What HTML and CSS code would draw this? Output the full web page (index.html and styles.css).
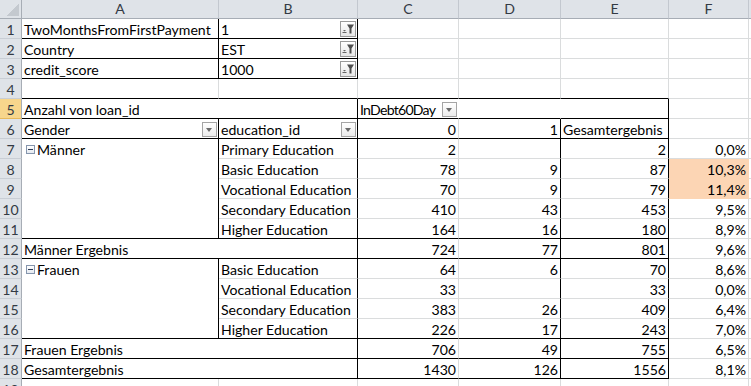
FILE: index.html
```html
<!DOCTYPE html>
<html>
<head>
<meta charset="utf-8">
<link rel="stylesheet" href="styles.css">
</head>
<body>
<div class="sheet">
  <!-- column headers -->
  <div class="ch corner"></div>
  <div class="ch">A</div><div class="ch">B</div><div class="ch">C</div><div class="ch">D</div><div class="ch">E</div><div class="ch">F</div><div class="ch last"></div>

  <!-- row 1 -->
  <div class="rh">1</div>
  <div class="c br bb">TwoMonthsFromFirstPayment</div>
  <div class="c br bb">1<span class="fbtn"><svg width="14" height="14" viewBox="0 0 14 14"><polygon points="6,2.5 13,2.5 10.5,6.5 10.5,11.5 8.5,11.5 8.5,6.5" fill="#4d4d4d"/><rect x="1.5" y="10" width="4" height="1" fill="#666"/><polygon points="2,8 5,8 3.5,9.5" fill="#666"/></svg></span></div>
  <div class="c"></div><div class="c"></div><div class="c"></div><div class="c"></div><div class="c"></div>

  <!-- row 2 -->
  <div class="rh">2</div>
  <div class="c br bb">Country</div>
  <div class="c br bb">EST<span class="fbtn"><svg width="14" height="14" viewBox="0 0 14 14"><polygon points="6,2.5 13,2.5 10.5,6.5 10.5,11.5 8.5,11.5 8.5,6.5" fill="#4d4d4d"/><rect x="1.5" y="10" width="4" height="1" fill="#666"/><polygon points="2,8 5,8 3.5,9.5" fill="#666"/></svg></span></div>
  <div class="c"></div><div class="c"></div><div class="c"></div><div class="c"></div><div class="c"></div>

  <!-- row 3 -->
  <div class="rh">3</div>
  <div class="c br bb">credit_score</div>
  <div class="c br bb">1000<span class="fbtn"><svg width="14" height="14" viewBox="0 0 14 14"><polygon points="6,2.5 13,2.5 10.5,6.5 10.5,11.5 8.5,11.5 8.5,6.5" fill="#4d4d4d"/><rect x="1.5" y="10" width="4" height="1" fill="#666"/><polygon points="2,8 5,8 3.5,9.5" fill="#666"/></svg></span></div>
  <div class="c"></div><div class="c"></div><div class="c"></div><div class="c"></div><div class="c"></div>

  <!-- row 4 -->
  <div class="rh">4</div>
  <div class="c bb"></div><div class="c bb"></div><div class="c bb"></div><div class="c bb"></div><div class="c bb"></div><div class="c"></div><div class="c"></div>

  <!-- row 5 -->
  <div class="rh sel">5</div>
  <div class="c span2 br bb">Anzahl von loan_id</div>
  <div class="c bb nr"><span class="tight">InDebt60Day</span><span class="dbtn"></span></div>
  <div class="c bb nr"></div>
  <div class="c bb br"></div>
  <div class="c"></div><div class="c"></div>

  <!-- row 6 -->
  <div class="rh">6</div>
  <div class="c br bb">Gender<span class="dbtn"></span></div>
  <div class="c br bb">education_id<span class="dbtn"></span></div>
  <div class="c r bb">0</div>
  <div class="c r br bb">1</div>
  <div class="c br bb">Gesamtergebnis</div>
  <div class="c"></div><div class="c"></div>

  <!-- rows 7-11 -->
  <div class="rh">7</div>
  <div class="c rows5 br bb"><span class="tog"></span>Männer</div>
  <div class="c br">Primary Education</div><div class="c r">2</div><div class="c r br"></div><div class="c r br">2</div><div class="c r">0,0%</div><div class="c"></div>

  <div class="rh">8</div>
  <div class="c br">Basic Education</div><div class="c r">78</div><div class="c r br">9</div><div class="c r br">87</div><div class="c r hl">10,3%</div><div class="c"></div>

  <div class="rh">9</div>
  <div class="c br">Vocational Education</div><div class="c r">70</div><div class="c r br">9</div><div class="c r br">79</div><div class="c r hl">11,4%</div><div class="c"></div>

  <div class="rh">10</div>
  <div class="c br">Secondary Education</div><div class="c r">410</div><div class="c r br">43</div><div class="c r br">453</div><div class="c r">9,5%</div><div class="c"></div>

  <div class="rh">11</div>
  <div class="c br bb">Higher Education</div><div class="c r bb">164</div><div class="c r br bb">16</div><div class="c r br bb">180</div><div class="c r">8,9%</div><div class="c"></div>

  <!-- row 12 -->
  <div class="rh">12</div>
  <div class="c span2 br bb">Männer Ergebnis</div><div class="c r bb">724</div><div class="c r br bb">77</div><div class="c r br bb">801</div><div class="c r">9,6%</div><div class="c"></div>

  <!-- rows 13-16 -->
  <div class="rh">13</div>
  <div class="c rows4 br bb"><span class="tog"></span>Frauen</div>
  <div class="c br">Basic Education</div><div class="c r">64</div><div class="c r br">6</div><div class="c r br">70</div><div class="c r">8,6%</div><div class="c"></div>

  <div class="rh">14</div>
  <div class="c br">Vocational Education</div><div class="c r">33</div><div class="c r br"></div><div class="c r br">33</div><div class="c r">0,0%</div><div class="c"></div>

  <div class="rh">15</div>
  <div class="c br">Secondary Education</div><div class="c r">383</div><div class="c r br">26</div><div class="c r br">409</div><div class="c r">6,4%</div><div class="c"></div>

  <div class="rh">16</div>
  <div class="c br bb">Higher Education</div><div class="c r bb">226</div><div class="c r br bb">17</div><div class="c r br bb">243</div><div class="c r">7,0%</div><div class="c"></div>

  <!-- row 17 -->
  <div class="rh">17</div>
  <div class="c span2 br bb">Frauen Ergebnis</div><div class="c r bb">706</div><div class="c r br bb">49</div><div class="c r br bb">755</div><div class="c r">6,5%</div><div class="c"></div>

  <!-- row 18 -->
  <div class="rh">18</div>
  <div class="c span2 br bb">Gesamtergebnis</div><div class="c r bb">1430</div><div class="c r br bb">126</div><div class="c r br bb">1556</div><div class="c r">8,1%</div><div class="c"></div>

  <!-- row 19 -->
  <div class="rh">19</div>
  <div class="c"></div><div class="c"></div><div class="c"></div><div class="c"></div><div class="c"></div><div class="c"></div><div class="c"></div>
</div>
</body>
</html>
```

FILE: styles.css
```css
* {
  box-sizing: border-box;
}

body {
  margin: 0;
  overflow: hidden;
  background: #fff;
  font-family: Lato, "Liberation Sans", sans-serif;
  font-size: 14.1px;
  color: #000;
}

.sheet {
  display: grid;
  grid-template-columns: 22px 197px 139px 101px 102px 108px 80px 1fr;
  grid-template-rows: 19px repeat(19, 20px);
  width: 751px;
  height: 386px;
  overflow: hidden;
}

.c {
  position: relative;
  border-right: 1px solid #dadcdd;
  border-bottom: 1px solid #dadcdd;
  padding: 1px 2px 0 2px;
  line-height: 19px;
  white-space: nowrap;
  overflow: hidden;
}

.r {
  text-align: right;
}

.tight {
  letter-spacing: -0.75px;
}

.bb {
  border-bottom-color: #000;
}

.br {
  border-right-color: #000;
}

.nr {
  border-right-color: #fff;
}

.span2 {
  grid-column: span 2;
}

.rows5 {
  grid-row: span 5;
}

.rows4 {
  grid-row: span 4;
}

.hl {
  background: #fcd5b4;
  border-right-color: #fcd5b4;
  border-bottom-color: #fcd5b4;
}

.ch {
  background: #dfe3e8;
  border-right: 1px solid #c3c8cf;
  border-bottom: 1px solid #a7adb5;
  text-align: center;
  line-height: 18px;
  color: #333a44;
}

.ch.last {
  border-right: none;
}

.corner {
  border-right-color: #a7adb5;
  background-color: #dfe3e8;
  background-image: linear-gradient(to bottom right, transparent 50%, #c4c9cf 50%);
  background-size: 12px 12px;
  background-position: right 2px bottom 2px;
  background-repeat: no-repeat;
}

.rh {
  background: #dfe3e8;
  border-right: 1px solid #a7adb5;
  border-bottom: 1px solid #c9ced5;
  text-align: center;
  padding-top: 1px;
  line-height: 19px;
  color: #333a44;
}

.rh.sel {
  background: #f7d68c;
  border-bottom-color: #e8b95a;
}

.fbtn {
  position: absolute;
  right: 1px;
  bottom: 1px;
  width: 16px;
  height: 16px;
  border: 1px solid #9a9a9a;
  background: linear-gradient(#ffffff, #e6e6e6);
  display: flex;
  align-items: center;
  justify-content: center;
}

.dbtn {
  position: absolute;
  right: 1px;
  bottom: 1px;
  width: 15px;
  height: 15px;
  border: 1px solid #a5a5a5;
  background: linear-gradient(#ffffff, #ebebeb);
}

.dbtn::after {
  content: "";
  position: absolute;
  left: 3px;
  top: 5px;
  border-left: 3.5px solid transparent;
  border-right: 3.5px solid transparent;
  border-top: 4px solid #6b6b6b;
}

.tog {
  display: inline-block;
  width: 9px;
  height: 9px;
  margin: 0 2px 0 2px;
  border: 1px solid #8595ad;
  background: linear-gradient(#ffffff, #e4e9f0);
  vertical-align: 1px;
  position: relative;
}

.tog::after {
  content: "";
  position: absolute;
  left: 1px;
  top: 3px;
  width: 5px;
  height: 1px;
  background: #2c3a55;
}
```
